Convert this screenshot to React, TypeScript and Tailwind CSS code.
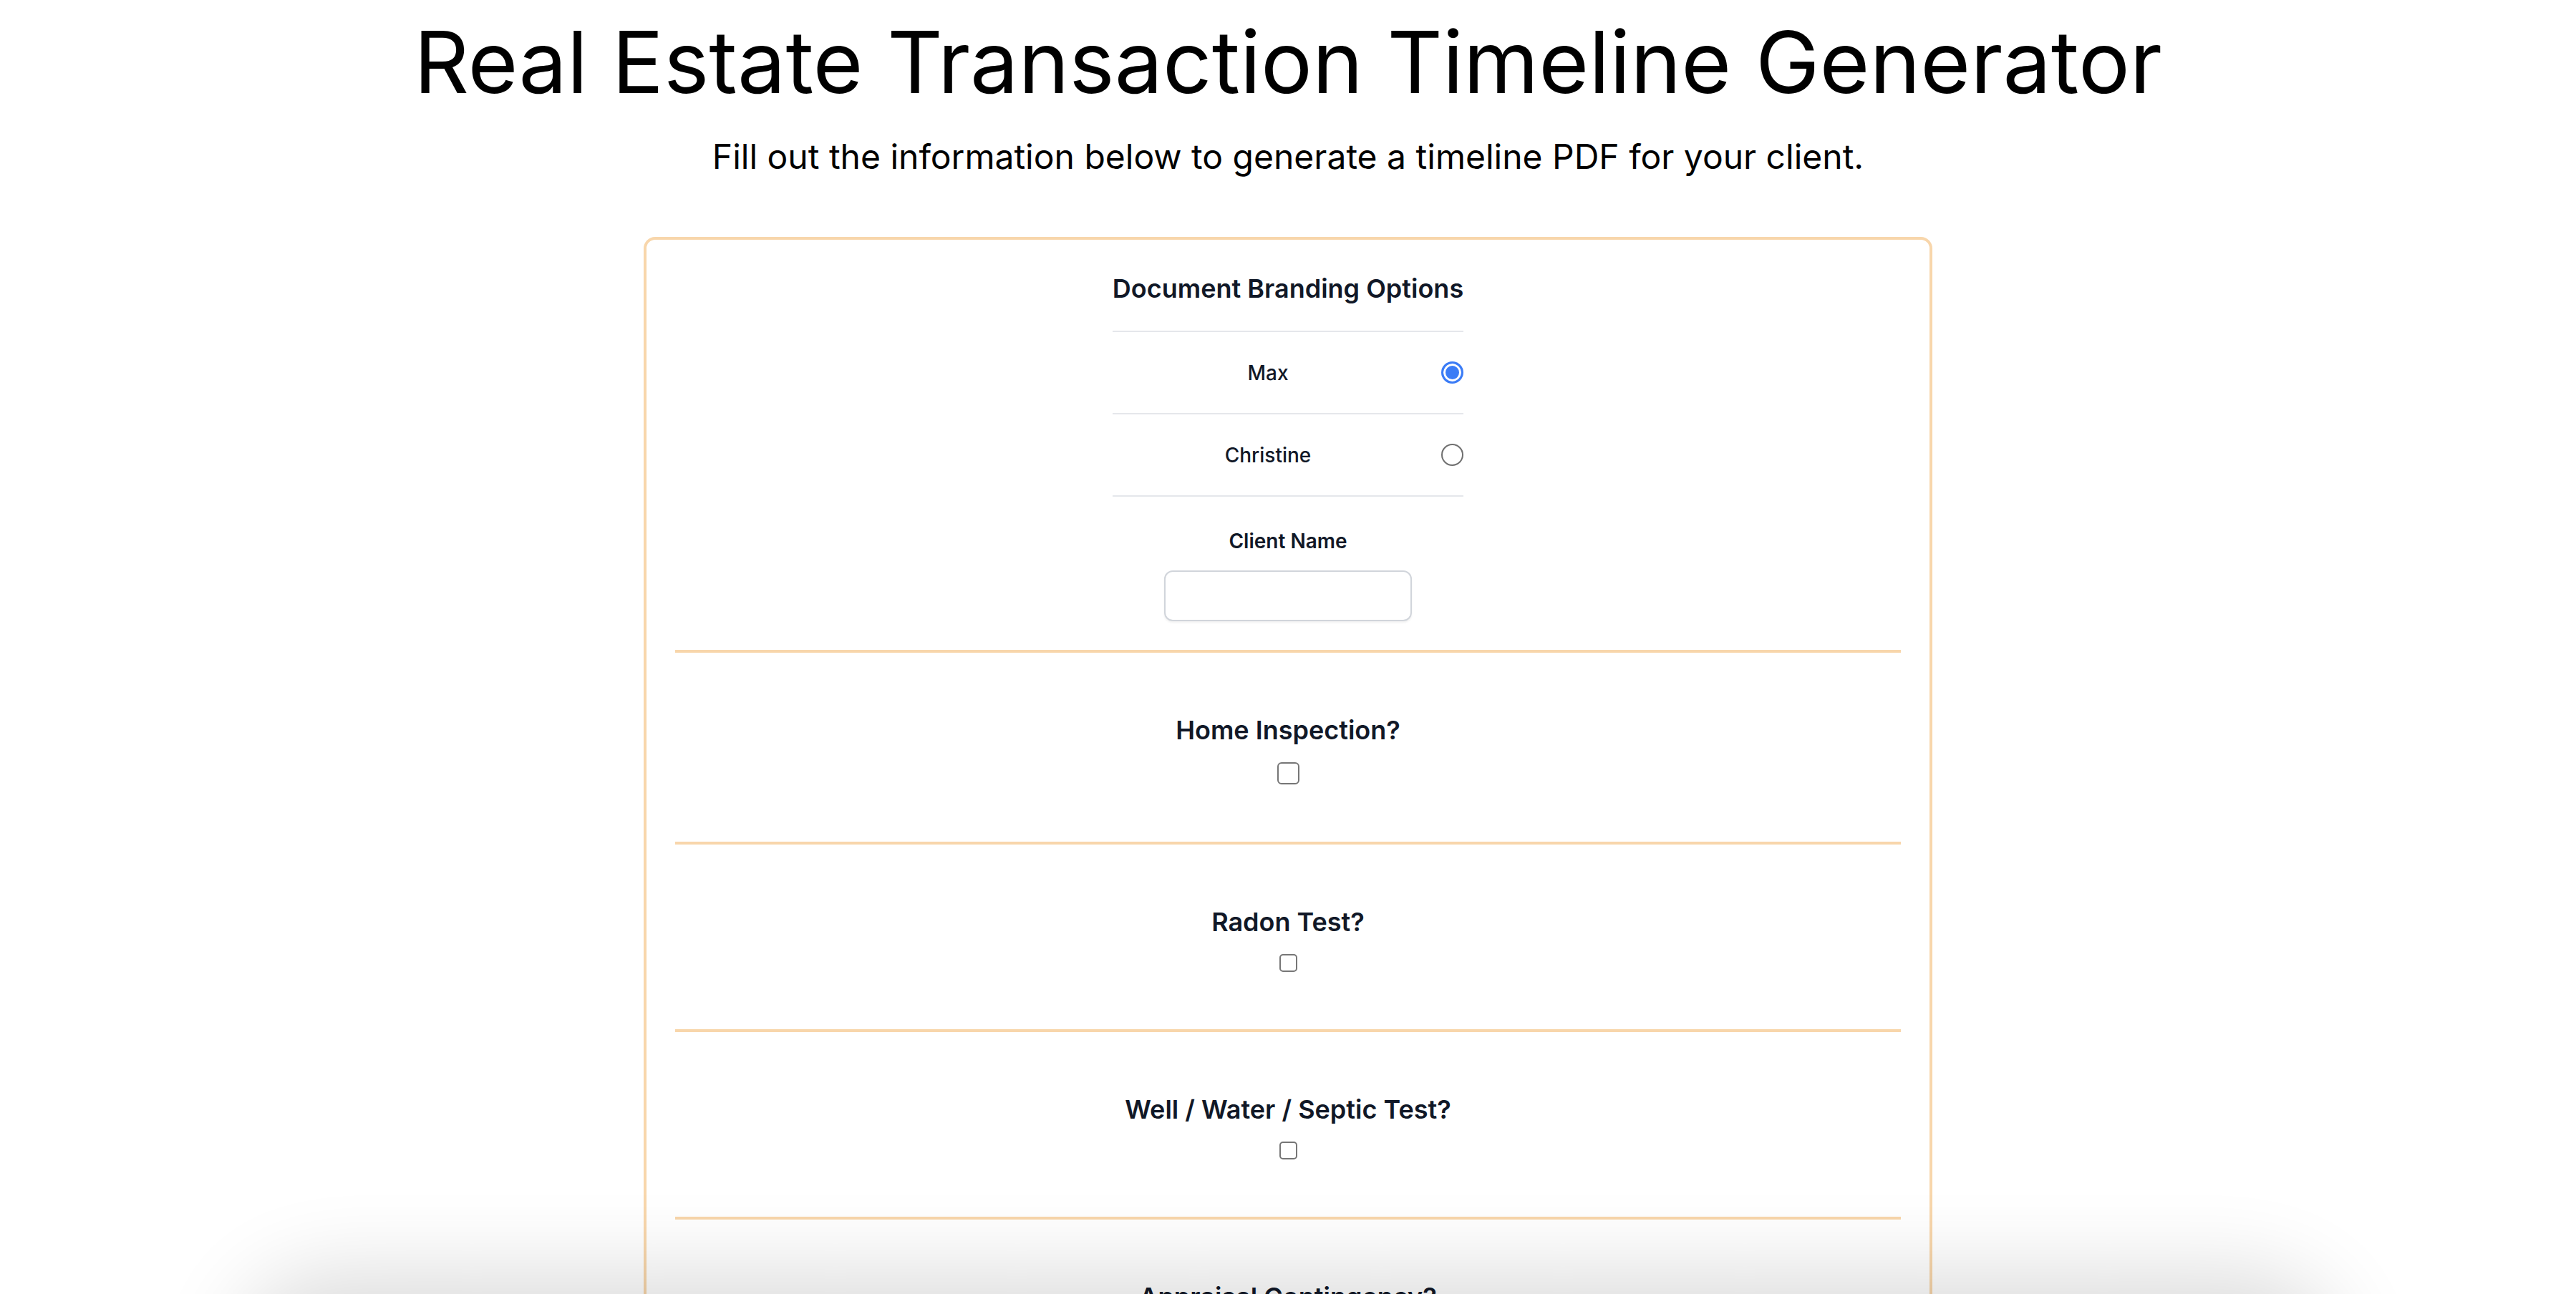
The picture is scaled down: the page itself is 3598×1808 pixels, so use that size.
import React, { useState } from "react";

const branders = ["Max", "Christine"];

const sections = [
  { label: "Home Inspection?", big: true },
  { label: "Radon Test?", big: false },
  { label: "Well / Water / Septic Test?", big: false },
  { label: "Appraisal Contingency?", big: false },
  { label: "Financing Contingency?", big: false },
];

const App = () => {
  const [brand, setBrand] = useState("Max");
  const [clientName, setClientName] = useState("");

  return (
    <div className="relative min-h-screen bg-white font-['Inter','Noto_Sans',sans-serif] text-black">
      {/* Header */}
      <header className="pt-[27px] text-center">
        <h1 className="text-[120px] leading-[120px] font-normal">
          Real Estate Transaction Timeline Generator
        </h1>
        <p className="mt-[40px] text-[48px] leading-[64px]">
          Fill out the information below to generate a timeline PDF for your client.
        </p>
      </header>

      {/* Form card */}
      <form className="mx-auto mt-[80px] w-[1800px] rounded-[16px] border-4 border-[#f8d6ab] px-[40px] pb-[80px] text-[#111827]">
        <div className="flex flex-col items-center border-b-4 border-[#f8d6ab] pt-[40px] pb-[40px]">
          <div className="w-fit">
            <h2 className="mb-[31px] text-[36px] leading-[56px] font-semibold">
              Document Branding Options
            </h2>
            <div className="border-b-2 border-[#e5e7eb]">
              {branders.map((name) => (
                <label
                  key={name}
                  className="flex h-[115px] items-center border-t-2 border-[#e5e7eb]"
                >
                  <span className="flex-1 text-center text-[28px] leading-[40px] font-medium">
                    {name}
                  </span>
                  <span className="flex pl-[25px]">
                    <input
                      type="radio"
                      name="brand"
                      checked={brand === name}
                      onChange={() => setBrand(name)}
                      className="h-[31px] w-[31px] appearance-none rounded-full border-2 border-[#6f6f6f] bg-white checked:border-[3px] checked:border-[#3b7cf6] checked:bg-[#3b7cf6] checked:shadow-[inset_0_0_0_3px_white]"
                    />
                  </span>
                </label>
              ))}
            </div>
          </div>

          <label className="mt-[42px] text-[28px] leading-[40px] font-semibold">
            Client Name
          </label>
          <input
            type="text"
            value={clientName}
            onChange={(e) => setClientName(e.target.value)}
            className="mt-[21px] h-[71px] w-[346px] rounded-[12px] border-2 border-[#d1d5db] bg-white px-4 text-[28px] shadow-[0_2px_3px_rgba(0,0,0,0.06)] outline-none"
          />
        </div>

        {sections.map((s) => (
          <div
            key={s.label}
            className="flex flex-col items-center border-b-4 border-[#f8d6ab] py-[80px]"
          >
            <h3 className="text-[36px] leading-[56px] font-semibold">{s.label}</h3>
            <input
              type="checkbox"
              className={`mt-[17px] appearance-none border-2 border-[#767676] bg-white ${
                s.big ? "h-[31px] w-[31px] rounded-[6px]" : "h-[25px] w-[25px] rounded-[5px]"
              }`}
            />
          </div>
        ))}
      </form>

      {/* shadow of the bottom bar just below the viewport */}
      <div className="pointer-events-none fixed top-[1808px] left-[360px] right-[360px] h-[200px] rounded-[140px] bg-white shadow-[0_0_120px_30px_rgba(0,0,0,0.14)]" />
    </div>
  );
};

export default App;
